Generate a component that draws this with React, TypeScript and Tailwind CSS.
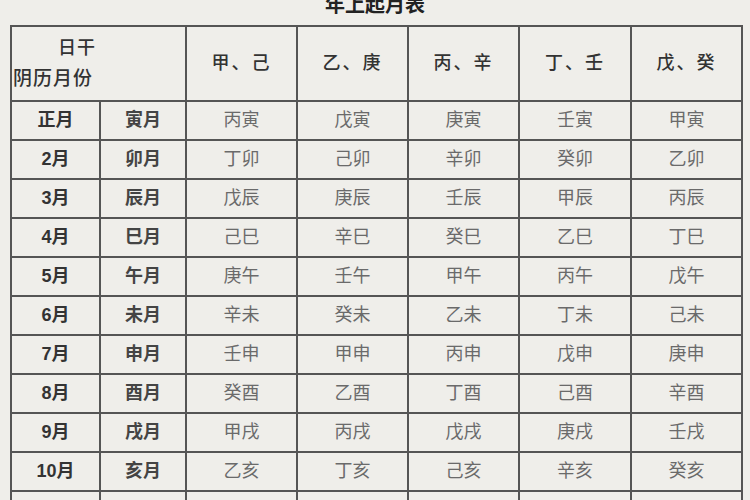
import React from "react";

const heads = ["甲、己", "乙、庚", "丙、辛", "丁、壬", "戊、癸"];
const rows: [string, string, string[]][] = [
  ["正月", "寅月", ["丙寅", "戊寅", "庚寅", "壬寅", "甲寅"]],
  ["2月", "卯月", ["丁卯", "己卯", "辛卯", "癸卯", "乙卯"]],
  ["3月", "辰月", ["戊辰", "庚辰", "壬辰", "甲辰", "丙辰"]],
  ["4月", "巳月", ["己巳", "辛巳", "癸巳", "乙巳", "丁巳"]],
  ["5月", "午月", ["庚午", "壬午", "甲午", "丙午", "戊午"]],
  ["6月", "未月", ["辛未", "癸未", "乙未", "丁未", "己未"]],
  ["7月", "申月", ["壬申", "甲申", "丙申", "戊申", "庚申"]],
  ["8月", "酉月", ["癸酉", "乙酉", "丁酉", "己酉", "辛酉"]],
  ["9月", "戌月", ["甲戌", "丙戌", "戊戌", "庚戌", "壬戌"]],
  ["10月", "亥月", ["乙亥", "丁亥", "己亥", "辛亥", "癸亥"]],
  ["11月", "子月", ["丙子", "戊子", "庚子", "壬子", "甲子"]],
  ["12月", "丑月", ["丁丑", "己丑", "辛丑", "癸丑", "乙丑"]],
];

const font = { fontFamily: '"Liberation Sans", "Noto Sans CJK SC", sans-serif' };

export default function App() {
  return (
    <div
      className="w-[750px] h-[500px] overflow-hidden bg-[#efeeea] text-[#333]"
      style={font}
    >
      <div className="h-[25px] overflow-hidden flex justify-center">
        <div className="text-[20px] font-bold leading-[20px] -mt-[5px] text-[#222]">
          年上起月表
        </div>
      </div>
      <table className="ml-[10px] border-collapse table-fixed w-[731px]">
        <colgroup>
          <col className="w-[89px]" />
          <col className="w-[86px]" />
          <col className="w-[111px]" />
          <col className="w-[111px]" />
          <col className="w-[111px]" />
          <col className="w-[112px]" />
          <col className="w-[111px]" />
        </colgroup>
        <tbody>
          <tr className="h-[75px]">
            <td colSpan={2} className="border-2 border-[#555] p-0 align-top">
              <div className="flex flex-col h-[73px]">
                <div className="text-[18px] leading-[22px] mt-[10px] pl-[46px] text-[#333] font-medium tracking-[1px]">
                  日干
                </div>
                <div className="text-[19px] leading-[22px] mt-[9px] pl-[1px] text-[#333] font-medium tracking-[1px]">
                  阴历月份
                </div>
              </div>
            </td>
            {heads.map((h) => (
              <td
                key={h}
                className="border-2 border-[#555] text-center text-[18px] text-[#333] font-medium tracking-[2px] p-0"
              >
                {h}
              </td>
            ))}
          </tr>
          {rows.map(([m, b, cells]) => (
            <tr key={m} className="h-[39px]">
              <td className="border-2 border-[#555] text-center text-[18px] font-bold text-[#333] p-0">
                {m}
              </td>
              <td className="border-2 border-[#555] text-center text-[18px] font-bold text-[#444] p-0">
                {b}
              </td>
              {cells.map((c, i) => (
                <td
                  key={i}
                  className="border-2 border-[#555] text-center text-[18px] text-[#6a6a6a] p-0"
                >
                  {c}
                </td>
              ))}
            </tr>
          ))}
        </tbody>
      </table>
    </div>
  );
}
